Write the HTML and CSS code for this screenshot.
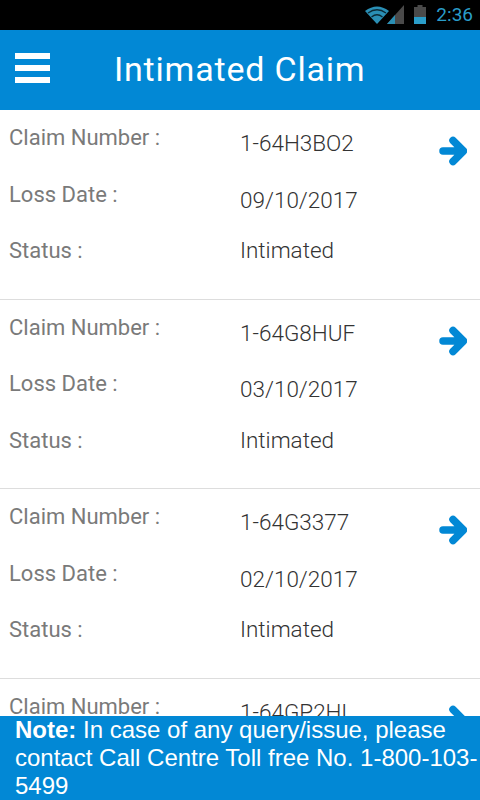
FILE: index.html
```html
<!DOCTYPE html>
<html lang="en">
<head>
    <meta charset="UTF-8">
    <meta name="viewport" content="width=device-width, initial-scale=1.0">
    <title>Intimated Claim</title>
    <link rel="stylesheet" href="styles.css">
</head>
<body>
    <div class="status-bar">
        <svg class="status-wifi" width="24" height="19" viewBox="0 0 24 19">
            <path d="M0 6 Q12 -3 24 6 L12 19 Z" fill="#2a8fb5"/>
            <path d="M3 8 Q12 1.500 21 8" fill="none" stroke="#0b2a36" stroke-width="1.300"/>
            <path d="M6.500 12 Q12 7.500 17.500 12" fill="none" stroke="#0b2a36" stroke-width="1.300"/>
        </svg>
        <svg class="status-signal" width="17" height="19" viewBox="0 0 17 19">
            <path d="M17 0 V19 H0 Z" fill="#4a4a4a"/>
            <path d="M8 10 V19 H0 Z" fill="#2a8fb5"/>
        </svg>
        <svg class="status-battery" width="12" height="19" viewBox="0 0 12 19">
            <path d="M3.500 0 H8.500 V2 H12 V19 H0 V2 H3.500 Z" fill="#4a4a4a"/>
            <rect y="12" width="12" height="7" fill="#2a9dc9"/>
        </svg>
        <span class="status-time">2:36</span>
    </div>

    <div class="header">
        <div class="menu-icon">
            <span></span>
            <span></span>
            <span></span>
        </div>
        <div class="header-title">Intimated Claim</div>
    </div>

    <div class="claim-list">
        <div class="claim">
            <div class="claim-fields">
                <div class="field"><span class="label">Claim Number :</span><span class="value">1-64H3BO2</span></div>
                <div class="field"><span class="label">Loss Date :</span><span class="value">09/10/2017</span></div>
                <div class="field status"><span class="label">Status :</span><span class="value">Intimated</span></div>
            </div>
            <svg class="arrow" width="28" height="30" viewBox="0 0 28 30"><path d="M4 15 H23 M14 4.500 L24.500 15 L14 25.500" fill="none" stroke="#0288d5" stroke-width="7.500" stroke-linecap="round" stroke-linejoin="round"/></svg>
        </div>
        <div class="claim">
            <div class="claim-fields">
                <div class="field"><span class="label">Claim Number :</span><span class="value">1-64G8HUF</span></div>
                <div class="field"><span class="label">Loss Date :</span><span class="value">03/10/2017</span></div>
                <div class="field status"><span class="label">Status :</span><span class="value">Intimated</span></div>
            </div>
            <svg class="arrow" width="28" height="30" viewBox="0 0 28 30"><path d="M4 15 H23 M14 4.500 L24.500 15 L14 25.500" fill="none" stroke="#0288d5" stroke-width="7.500" stroke-linecap="round" stroke-linejoin="round"/></svg>
        </div>
        <div class="claim">
            <div class="claim-fields">
                <div class="field"><span class="label">Claim Number :</span><span class="value">1-64G3377</span></div>
                <div class="field"><span class="label">Loss Date :</span><span class="value">02/10/2017</span></div>
                <div class="field status"><span class="label">Status :</span><span class="value">Intimated</span></div>
            </div>
            <svg class="arrow" width="28" height="30" viewBox="0 0 28 30"><path d="M4 15 H23 M14 4.500 L24.500 15 L14 25.500" fill="none" stroke="#0288d5" stroke-width="7.500" stroke-linecap="round" stroke-linejoin="round"/></svg>
        </div>
        <div class="claim">
            <div class="claim-fields">
                <div class="field"><span class="label">Claim Number :</span><span class="value">1-64GP2HL</span></div>
            </div>
            <svg class="arrow" width="28" height="30" viewBox="0 0 28 30"><path d="M4 15 H23 M14 4.500 L24.500 15 L14 25.500" fill="none" stroke="#0288d5" stroke-width="7.500" stroke-linecap="round" stroke-linejoin="round"/></svg>
        </div>
    </div>

    <div class="note"><b>Note:</b> In case of any query/issue, please contact Call Centre Toll free No. 1-800-103-5499</div>
</body>
</html>
```

FILE: styles.css
```css
/* base */
html, body {
    height: 100%;
}

body {
    margin: 0;
    overflow: hidden;
    display: flex;
    flex-direction: column;
    font-family: Roboto, sans-serif;
    background-color: #fff;
}

/* status bar */
.status-bar {
    flex: none;
    height: 30px;
    box-sizing: border-box;
    padding: 5px 7px 0 0;
    display: flex;
    justify-content: flex-end;
    align-items: flex-start;
    background-color: #000;
}

.status-signal {
    margin-left: -2px;
}

.status-battery {
    margin-left: 10px;
}

.status-time {
    margin-left: 10px;
    font-size: 19px;
    line-height: 20px;
    color: #2a9dc9;
}

/* header */
.header {
    flex: none;
    height: 80px;
    display: flex;
    align-items: center;
    background-color: #0288d5;
    color: #fff;
}

.menu-icon {
    width: 35px;
    margin: 0 0 4px 15px;
    display: flex;
    flex-direction: column;
    gap: 6px;
}

.menu-icon span {
    height: 6px;
    background-color: #fff;
}

.header-title {
    margin: 0 0 2px 64px;
    font-size: 34px;
    letter-spacing: 0.8px;
}

/* claims */
.claim-list {
    flex: 1;
    min-height: 0;
    overflow: hidden;
}

.claim {
    height: 189.5px;
    box-sizing: border-box;
    padding: 13px 13px 0 9px;
    display: flex;
    justify-content: space-between;
    align-items: flex-start;
    border-bottom: 1px solid #ddd;
}

.field {
    height: 56.5px;
    display: flex;
}

.label {
    width: 231px;
    font-size: 22px;
    line-height: 30px;
    color: #7a7a7a;
}

.value {
    padding-top: 6px;
    font-size: 22.5px;
    font-weight: 300;
    line-height: 28px;
    color: #333;
}

.field.status .value {
    padding-top: 0;
}

.arrow {
    margin-top: 13px;
}

/* note */
.note {
    flex: none;
    height: 84px;
    box-sizing: border-box;
    padding-left: 15px;
    font-family: "Liberation Sans", sans-serif;
    font-size: 24px;
    line-height: 28px;
    color: #fff;
    background-color: #0288d5;
}
```
